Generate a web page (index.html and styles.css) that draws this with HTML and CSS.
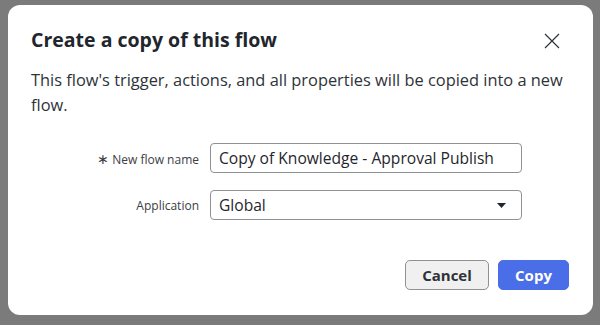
FILE: index.html
```html
<!DOCTYPE html>
<html lang="en">
<head>
    <meta charset="UTF-8">
    <meta name="viewport" content="width=device-width, initial-scale=1.0">
    <title>Create a copy of this flow</title>
    <link rel="stylesheet" href="styles.css">
</head>
<body>
    <div class="backdrop">
        <div class="modal">
            <div class="modal-header">
                <h2>Create a copy of this flow</h2>
                <button class="close" aria-label="Close">
                    <svg width="16" height="16" viewBox="0 0 16 16">
                        <path d="M1 1 L15 15 M15 1 L1 15" stroke="#2e3338" stroke-width="1.2" fill="none"/>
                    </svg>
                </button>
            </div>
            <p class="intro">This flow's trigger, actions, and all properties will be copied into a new flow.</p>

            <div class="form">
                <label class="label"><span class="req">&#x2217;</span> New flow name</label>
                <div class="field">Copy of Knowledge - Approval Publish</div>

                <label class="label">Application</label>
                <div class="field select">
                    <span>Global</span>
                    <svg width="9" height="5" viewBox="0 0 9 5"><path d="M0 0 L9 0 L4.5 5 Z" fill="#1f262d"/></svg>
                </div>
            </div>

            <div class="modal-footer">
                <button class="btn btn-cancel">Cancel</button>
                <button class="btn btn-copy">Copy</button>
            </div>
        </div>
    </div>
</body>
</html>
```

FILE: styles.css
```css
body {
    margin: 0;
    padding: 0;
    font-family: 'Open Sans', 'Noto Sans', sans-serif;
    color: #2e3338;
    background-color: #7b7b7b;
    height: 325px;
    overflow: hidden;
}

.backdrop {
    padding: 5px 7px 0 8px;
}

.modal {
    background-color: #ffffff;
    border-radius: 12px;
    height: 310px;
    box-sizing: border-box;
    padding: 0 24px 0 23px;
}

.modal-header {
    display: flex;
    justify-content: space-between;
    align-items: center;
    height: 68px;
}

.modal-header h2 {
    margin: 0;
    font-size: 19.5px;
    font-weight: 700;
    color: #1f262d;
    padding-top: 1px;
}

.close {
    background: none;
    border: none;
    padding: 0;
    margin-right: 9px;
    margin-top: 3px;
    display: flex;
}

.intro {
    margin: 0;
    font-size: 16.4px;
    line-height: 25px;
    color: #2e3338;
    margin-top: -6px;
}

.form {
    display: grid;
    grid-template-columns: 168px 312px;
    column-gap: 11px;
    row-gap: 17px;
    align-items: center;
    margin-top: 26px;
}

.label {
    text-align: right;
    font-size: 12px;
    color: #3b4046;
}

.req {
    font-size: 14px;
}

.field {
    height: 30px;
    box-sizing: border-box;
    border: 1px solid #8d9296;
    border-radius: 4px;
    padding: 0 8px;
    font-size: 15.6px;
    line-height: 28px;
    color: #1f262d;
}

.select {
    display: flex;
    justify-content: space-between;
    align-items: center;
    padding-right: 15px;
}

.modal-footer {
    display: flex;
    justify-content: flex-end;
    gap: 9px;
    margin-top: 40px;
}

.btn {
    font-family: 'Open Sans', 'Noto Sans', sans-serif;
    font-size: 15px;
    font-weight: 700;
    height: 30px;
    border-radius: 5px;
    cursor: pointer;
}

.btn-cancel {
    width: 84px;
    background-color: #f0f0f0;
    border: 1px solid #8d9296;
    color: #2e3338;
}

.btn-copy {
    width: 71px;
    background-color: #4a6ee8;
    border: 1px solid #4a6ee8;
    color: #ffffff;
}
```
